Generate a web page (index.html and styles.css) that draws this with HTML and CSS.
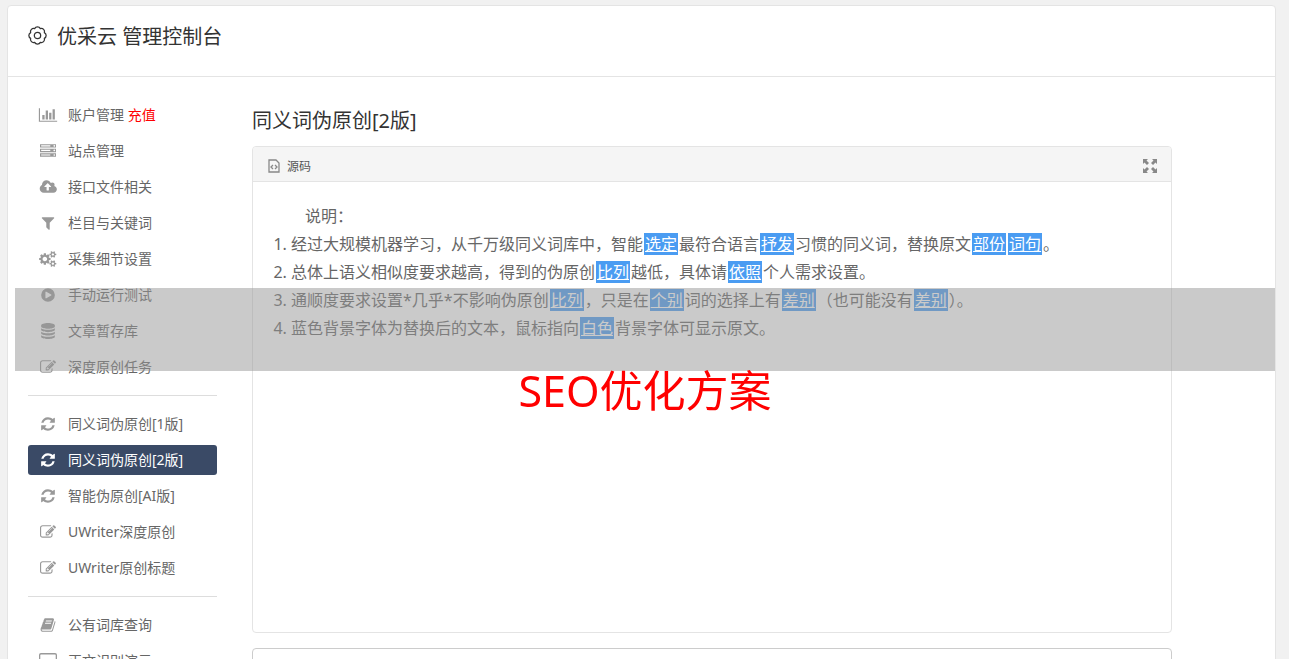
FILE: index.html
```html
<!DOCTYPE html>
<html lang="zh-CN">
<head>
    <meta charset="UTF-8">
    <meta name="viewport" content="width=device-width, initial-scale=1.0">
    <title>优采云 管理控制台</title>
    <link rel="stylesheet" href="styles.css">
</head>
<body>
    <!-- icon sprite -->
    <svg class="sprite" aria-hidden="true">
        <symbol id="i-chart" viewBox="0 0 2048 1792"><path d="M640 896v512h-256v-512h256zm384-512v1024h-256v-1024h256zm1024 1152v128h-2048v-1536h128v1408h1920zm-640-896v768h-256v-768h256zm384-384v1152h-256v-1152h256z"/></symbol>
        <symbol id="i-server" viewBox="0 0 1792 1792"><path d="M128 1408h1024v-128h-1024v128zm0-512h1024v-128h-1024v128zm1568 448q0-40-28-68t-68-28-68 28-28 68 28 68 68 28 68-28 28-68zm-1568-960h1024v-128h-1024v128zm1568 448q0-40-28-68t-68-28-68 28-28 68 28 68 68 28 68-28 28-68zm0-512q0-40-28-68t-68-28-68 28-28 68 28 68 68 28 68-28 28-68zm96 832v384h-1792v-384h1792zm0-512v384h-1792v-384h1792zm0-512v384h-1792v-384h1792z"/></symbol>
        <symbol id="i-cloud" viewBox="0 0 1984 1792"><path d="M1344 864q0-14-9-23l-352-352q-9-9-23-9t-23 9l-351 351q-10 12-10 24 0 14 9 23t23 9h224v352q0 13 9.500 22.500t22.500 9.500h192q13 0 22.500-9.500t9.500-22.500v-352h224q13 0 22.500-9.500t9.500-22.500zm640 288q0 159-112.500 271.500t-271.500 112.500h-1088q-185 0-316.500-131.500t-131.500-316.500q0-130 70-240t188-165q-2-30-2-43 0-212 150-362t362-150q156 0 285.500 87t188.500 231q71-62 166-62 106 0 181 75t75 181q0 76-41 138 130 31 213.500 135.500t83.500 238.500z"/></symbol>
        <symbol id="i-filter" viewBox="0 0 1792 1792"><path d="M1595 295q17 41-14 70l-493 493v742q0 42-39 59-13 5-25 5-27 0-45-19l-256-256q-19-19-19-45v-486l-493-493q-31-29-14-70 17-39 59-39h1280q42 0 59 39z"/></symbol>
        <symbol id="i-cogs" viewBox="0 0 1856 1792"><path d="M832 896q0-106-75-181t-181-75-181 75-75 181 75 181 181 75 181-75 75-181zm768 512q0-52-38-90t-90-38-90 38-38 90q0 53 37.500 90.500t90.500 37.500 90.500-37.500 37.500-90.500zm0-1024q0-52-38-90t-90-38-90 38-38 90q0 53 37.500 90.500t90.500 37.500 90.500-37.500 37.500-90.500zm-384 421v185q0 10-7 19.500t-16 10.500l-155 24q-11 35-32 76 34 48 90 115 7 11 7 20 0 12-7 19-23 30-82.500 89.500t-78.500 59.500q-11 0-21-7l-115-90q-37 19-77 31-11 108-23 155-7 24-30 24h-186q-11 0-20-7.500t-10-17.500l-23-153q-34-10-75-31l-118 89q-7 7-20 7-11 0-21-8-144-133-144-160 0-9 7-19 10-14 41-53t47-61q-23-44-35-82l-152-24q-10-1-17-9.500t-7-19.500v-185q0-10 7-19.500t16-10.500l155-24q11-35 32-76-34-48-90-115-7-11-7-20 0-12 7-20 22-30 82-89t79-59q11 0 21 7l115 90q34-18 77-32 11-108 23-154 7-24 30-24h186q11 0 20 7.500t10 17.500l23 153q34 10 75 31l118-89q8-7 20-7 11 0 21 8 144 133 144 160 0 8-7 19-12 16-42 54t-45 60q23 48 34 82l152 23q10 2 17 10.500t7 19.500zm640 533v140q0 16-149 31-12 27-30 52 51 113 51 138 0 4-4 7-122 71-124 71-8 0-46-47t-52-68q-20 2-30 2t-30-2q-14 21-52 68t-46 47q-2 0-124-71-4-3-4-7 0-25 51-138-18-25-30-52-149-15-149-31v-140q0-16 149-31 13-29 30-52-51-113-51-138 0-4 4-7 4-2 35-20t59-34 30-16q8 0 46 46.500t52 67.500q20-2 30-2t30 2q51-71 92-112l6-2q4 0 124 70 4 3 4 7 0 25-51 138 17 23 30 52 149 15 149 31zm0-1024v140q0 16-149 31-12 27-30 52 51 113 51 138 0 4-4 7-122 71-124 71-8 0-46-47t-52-68q-20 2-30 2t-30-2q-14 21-52 68t-46 47q-2 0-124-71-4-3-4-7 0-25 51-138-18-25-30-52-149-15-149-31v-140q0-16 149-31 13-29 30-52-51-113-51-138 0-4 4-7 4-2 35-20t59-34 30-16q8 0 46 46.500t52 67.500q20-2 30-2t30 2q51-71 92-112l6-2q4 0 124 70 4 3 4 7 0 25-51 138 17 23 30 52 149 15 149 31z"/></symbol>
        <symbol id="i-play" viewBox="0 0 1792 1792"><path fill-rule="evenodd" d="M896 128a768 768 0 1 0 0 1536a768 768 0 0 0 0-1536zM1248 951l-544 320q-32 18-64 1-32-19-32-56v-640q0-37 32-56 33-18 64 1l544 320q32 18 32 55t-32 55z"/></symbol>
        <symbol id="i-database" viewBox="0 0 1792 1792"><path d="M128 256c0-141 344-256 768-256s768 115 768 256v128c0 141-344 256-768 256s-768-115-768-256zM128 598c165 116 466 170 768 170s603-54 768-170v170c0 141-344 256-768 256s-768-115-768-256zM128 982c165 116 466 170 768 170s603-54 768-170v170c0 141-344 256-768 256s-768-115-768-256zM128 1366c165 116 466 170 768 170s603-54 768-170v170c0 141-344 256-768 256s-768-115-768-256z"/></symbol>
        <symbol id="i-edit" viewBox="0 0 1792 1792"><path d="M888 1184l116-116-152-152-116 116v56h96v96h56zm440-720q-16-16-33 1l-350 350q-17 17-1 33t33-1l350-350q17-17 1-33zm80 594v190q0 119-84.500 203.500t-203.500 84.500h-832q-119 0-203.500-84.500t-84.500-203.500v-832q0-119 84.500-203.500t203.500-84.500h832q63 0 117 25 15 7 18 23 3 17-9 29l-49 49q-14 14-32 8-23-6-45-6h-832q-66 0-113 47t-47 113v832q0 66 47 113t113 47h832q66 0 113-47t47-113v-126q0-13 9-22l64-64q15-15 35-7t20 29zm-96-738l288 288-672 672h-288v-288zm444 132l-92 92-288-288 92-92q28-28 68-28t68 28l152 152q28 28 28 68t-28 68z"/></symbol>
        <symbol id="i-refresh" viewBox="0 0 1792 1792"><path d="M1639 1056q0 5-1 7-64 268-268 434.500t-478 166.500q-146 0-282.500-55t-243.500-157l-129 129q-19 19-45 19t-45-19-19-45v-448q0-26 19-45t45-19h448q26 0 45 19t19 45-19 45l-137 137q71 66 161 102t187 36q134 0 250-65t186-179q11-17 53-117 8-23 30-23h192q13 0 22.500 9.500t9.500 22.500zm25-800v448q0 26-19 45t-45 19h-448q-26 0-45-19t-19-45 19-45l138-138q-148-137-349-137-134 0-250 65t-186 179q-11 17-53 117-8 23-30 23h-199q-13 0-22.500-9.500t-9.500-22.500v-7q65-268 270-434.500t480-166.500q146 0 284 55.500t245 156.500l130-129q19-19 45-19t45 19 19 45z"/></symbol>
        <symbol id="i-book" viewBox="0 0 1792 1792"><path d="M1703 478q40 57 18 129l-275 906q-19 64-76.500 107.500t-122.500 43.500h-923q-77 0-148.500-53.500t-99.500-131.500q-24-67-2-127 0-4 3-27t4-37q1-8-3-21.500t-3-19.500q2-11 8-21t16.500-23.500 16.500-23.500q23-38 45-91.500t30-91.500q3-10 .5-30t-.5-28q3-11 17-28t17-23q21-36 42-92t25-90q1-9-2.500-32t.5-28q4-13 22-30.500t22-22.500q19-26 42.500-84.500t27.500-96.500q1-8-3-25.500t-2-26.500q2-8 9-18t18-23 17-21q8-12 16.500-30.500t15-35 16-36 19.500-32 26.500-23.500 36-11.500 47.500 5.500l-1 3q38-9 51-9h761q74 0 114 56t18 130l-274 906q-36 119-71.500 153.500t-128.500 34.500h-869q-27 0-38 15-11 16-1 43 24 70 144 70h923q29 0 56-15.500t35-41.500l300-987q7-22 5-57 38 15 59 43zm-1064 2q-4 13 2 22.500t20 9.500h608q13 0 25.500-9.500t16.500-22.500l21-64q4-13-2-22.500t-20-9.500h-608q-13 0-25.500 9.500t-16.500 22.500zm-83 256q-4 13 2 22.500t20 9.500h608q13 0 25.500-9.500t16.500-22.500l21-64q4-13-2-22.500t-20-9.500h-608q-13 0-25.500 9.500t-16.500 22.500z"/></symbol>
        <symbol id="i-laptop" viewBox="0 0 18 16"><path fill-rule="evenodd" d="M2 0h14q2 0 2 2v10q0 2-2 2H2q-2 0-2-2V2q0-2 2-2zM2 1.400q-.7 0-.7.700v10q0 .7.700.7h14q.7 0 .7-.7v-10q0-.7-.7-.7z"/></symbol>
    </svg>

    <div class="container">
        <header class="header">
            <svg class="header-icon" viewBox="0 0 18 18" aria-hidden="true">
                <path d="M6.300 2.500a3 3 0 0 1 5.400 0a3 3 0 0 1 3.800 3.800a3 3 0 0 1 0 5.400a3 3 0 0 1-3.800 3.800a3 3 0 0 1-5.400 0a3 3 0 0 1-3.800-3.800a3 3 0 0 1 0-5.400a3 3 0 0 1 3.800-3.800z"/>
                <circle cx="9" cy="9" r="3"/>
            </svg>
            <h1>优采云 管理控制台</h1>
        </header>

        <div class="content">
            <nav class="sidebar">
                <ul class="menu">
                    <li><a href="#"><svg class="icon"><use href="#i-chart"/></svg><span>账户管理 <em>充值</em></span></a></li>
                    <li><a href="#"><svg class="icon"><use href="#i-server"/></svg><span>站点管理</span></a></li>
                    <li><a href="#"><svg class="icon"><use href="#i-cloud"/></svg><span>接口文件相关</span></a></li>
                    <li><a href="#"><svg class="icon"><use href="#i-filter"/></svg><span>栏目与关键词</span></a></li>
                    <li><a href="#"><svg class="icon"><use href="#i-cogs"/></svg><span>采集细节设置</span></a></li>
                    <li><a href="#"><svg class="icon"><use href="#i-play"/></svg><span>手动运行测试</span></a></li>
                    <li><a href="#"><svg class="icon"><use href="#i-database"/></svg><span>文章暂存库</span></a></li>
                    <li><a href="#"><svg class="icon"><use href="#i-edit"/></svg><span>深度原创任务</span></a></li>
                </ul>
                <ul class="menu">
                    <li><a href="#"><svg class="icon"><use href="#i-refresh"/></svg><span>同义词伪原创[1版]</span></a></li>
                    <li><a href="#" class="active"><svg class="icon"><use href="#i-refresh"/></svg><span>同义词伪原创[2版]</span></a></li>
                    <li><a href="#"><svg class="icon"><use href="#i-refresh"/></svg><span>智能伪原创[AI版]</span></a></li>
                    <li><a href="#"><svg class="icon"><use href="#i-edit"/></svg><span>UWriter深度原创</span></a></li>
                    <li><a href="#"><svg class="icon"><use href="#i-edit"/></svg><span>UWriter原创标题</span></a></li>
                </ul>
                <ul class="menu">
                    <li><a href="#"><svg class="icon"><use href="#i-book"/></svg><span>公有词库查询</span></a></li>
                    <li><a href="#"><svg class="icon"><use href="#i-laptop"/></svg><span>正文识别演示</span></a></li>
                </ul>
            </nav>

            <main class="main">
                <h2>同义词伪原创[2版]</h2>

                <div class="editor">
                    <div class="toolbar">
                        <button type="button" class="tool">
                            <svg class="tool-source" viewBox="0 0 12 14" aria-hidden="true">
                                <path d="M1 1h7l3 3v9H1z"/>
                                <path d="M5 6L3 8l2 2M7 6l2 2-2 2"/>
                            </svg>
                            源码
                        </button>
                        <button type="button" class="tool" aria-label="全屏">
                            <svg class="tool-full" viewBox="0 0 14 14" aria-hidden="true">
                                <path d="M0 0h5L3.500 1.500 6 4 4 6 1.500 3.500 0 5zM14 0v5l-1.500-1.500L10 6 8 4l2.500-2.500L9 0zM0 14V9l1.500 1.500L4 8l2 2-2.500 2.500L5 14zM14 14H9l1.500-1.500L8 10l2-2 2.500 2.500L14 9z"/>
                            </svg>
                        </button>
                    </div>
                    <div class="editor-body">
                        <p>说明：</p>
                        <ol>
                            <li>经过大规模机器学习，从千万级同义词库中，智能<mark>选定</mark>最符合语言<mark>抒发</mark>习惯的同义词，替换原文<mark>部份</mark><mark>词句</mark>。</li>
                            <li>总体上语义相似度要求越高，得到的伪原创<mark>比列</mark>越低，具体请<mark>依照</mark>个人需求设置。</li>
                            <li>通顺度要求设置*几乎*不影响伪原创<mark>比列</mark>，只是在<mark>个别</mark>词的选择上有<mark>差别</mark>（也可能没有<mark>差别</mark>）。</li>
                            <li>蓝色背景字体为替换后的文本，鼠标指向<mark>白色</mark>背景字体可显示原文。</li>
                        </ol>
                    </div>
                </div>

                <textarea class="source-input" aria-label="原文"></textarea>
            </main>
        </div>
    </div>

    <div class="banner"><span>SEO优化方案</span></div>
</body>
</html>
```

FILE: styles.css
```css
* {
    margin: 0;
    padding: 0;
    box-sizing: border-box;
}

body {
    font-family: "Noto Sans", "Noto Sans CJK SC", sans-serif;
    font-size: 14px;
    color: #666;
    background: #f1f1f1;
    padding: 5px 13px 0 7px;
}

.sprite {
    display: none;
}

.container {
    background: #fff;
    border: 1px solid #e4e4e4;
    border-radius: 4px;
}

.header {
    display: flex;
    align-items: center;
    gap: 10px;
    height: 71px;
    padding: 0 20px 12px;
    border-bottom: 1px solid #e4e4e4;
}

.header-icon {
    width: 19px;
    height: 19px;
    fill: none;
    stroke: #333;
    stroke-width: 1.2;
    stroke-linejoin: round;
}

h1,
h2 {
    font-size: 20px;
    font-weight: 400;
    line-height: 28px;
    color: #333;
}

h1 {
    padding-top: 4px;
}

.content {
    display: grid;
    grid-template-columns: 189px 1fr;
    gap: 35px;
    padding: 23px 103px 20px 20px;
}

.menu {
    list-style: none;
}

.menu + .menu {
    margin-top: 13px;
    padding-top: 13px;
    border-top: 1px solid #ddd;
}

.menu li + li {
    margin-top: 6px;
}

.menu a {
    display: flex;
    align-items: center;
    gap: 10px;
    height: 30px;
    padding: 0 10px;
    border-radius: 3px;
    color: #666;
    text-decoration: none;
}

.menu span {
    padding-bottom: 2px;
}

.menu a.active {
    background: #3a4a66;
    color: #fff;
}

.menu em {
    font-style: normal;
    color: #f00;
}

.icon {
    width: 20px;
    height: 16px;
    fill: #999;
}

.active .icon {
    fill: #fff;
}

.main {
    min-width: 0;
}

h2 {
    margin: 7px 0 11px;
}

.editor {
    border: 1px solid #e4e4e4;
    border-radius: 4px;
    overflow: hidden;
}

.toolbar {
    display: flex;
    justify-content: space-between;
    align-items: center;
    height: 35px;
    padding: 3px 14px 0 15px;
    background: #f5f5f5;
    border-bottom: 1px solid #e4e4e4;
}

.tool {
    display: flex;
    align-items: center;
    gap: 7px;
    border: 0;
    background: none;
    font-family: inherit;
    font-size: 12px;
    color: #555;
    cursor: pointer;
}

.tool-source {
    width: 12px;
    height: 14px;
    fill: none;
    stroke: #888;
    stroke-width: 1.3;
}

.tool-full {
    width: 14px;
    height: 14px;
    fill: #888;
}

.editor-body {
    min-height: 450px;
    padding: 20px;
    font-size: 16px;
    line-height: 28px;
}

.editor-body p {
    text-indent: 2em;
}

.editor-body ol {
    list-style-position: outside;
    padding-left: 18px;
}

.editor-body mark {
    margin: 0 1px;
    padding: 0 1px;
    background: #4a9cf2;
    color: #fff;
    text-decoration: underline;
}

.source-input {
    display: block;
    width: 100%;
    height: 120px;
    margin-top: 15px;
    border: 1px solid #ccc;
    border-radius: 4px;
    resize: none;
}

/* translucent strip, the title hangs below it */
.banner {
    position: fixed;
    top: 288px;
    left: 15px;
    right: 14px;
    height: 83px;
    background: rgba(150, 150, 150, 0.5);
    text-align: center;
}

.banner span {
    display: block;
    padding-top: 73px;
    font-size: 43px;
    line-height: 60px;
    color: #f00;
}
```
